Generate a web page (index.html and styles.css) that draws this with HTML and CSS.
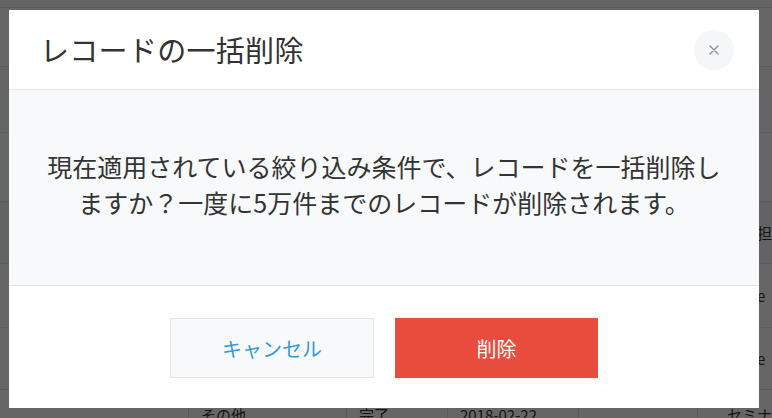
FILE: index.html
```html
<!DOCTYPE html>
<html lang="ja">
<head>
<meta charset="utf-8">
<title>レコードの一括削除</title>
<link rel="stylesheet" href="styles.css">
</head>
<body>
<div class="page">
  <div class="row row-a"></div>
  <div class="row row-b"></div>
  <div class="row row-c"></div>
  <div class="row row-d"></div>
  <div class="row row-e split"><span></span><span class="peek">担</span></div>
  <div class="row row-f split"><span></span><span class="peek">e</span></div>
  <div class="row row-g split"><span></span><span class="peek">e</span></div>
  <div class="row row-h cells">
    <span class="cell"></span>
    <span class="cell">その他</span>
    <span class="cell">完了</span>
    <span class="cell">2018-02-22</span>
    <span class="cell"></span>
    <span class="cell">セミナ</span>
  </div>
</div>

<div class="overlay">
  <div class="dialog" role="dialog">
    <div class="dlg-header">
      <h1 class="dlg-title">レコードの一括削除</h1>
      <button class="dlg-close" aria-label="閉じる">
        <svg width="10" height="10" viewBox="0 0 10 10"><path d="M1 1 L9 9 M9 1 L1 9" stroke="#8c8f91" stroke-width="1.4" stroke-linecap="round" fill="none"/></svg>
      </button>
    </div>
    <div class="dlg-body">
      <p class="dlg-text">現在適用されている絞り込み条件で、レコードを一括削除しますか？一度に5万件までのレコードが削除されます。</p>
    </div>
    <div class="dlg-footer">
      <button class="btn btn-cancel">キャンセル</button>
      <button class="btn btn-delete">削除</button>
    </div>
  </div>
</div>
</body>
</html>
```

FILE: styles.css
```css
* { box-sizing: border-box; }

html, body {
  margin: 0;
  padding: 0;
  width: 772px;
  height: 418px;
  overflow: hidden;
  font-family: "Noto Sans CJK JP", "Noto Sans", sans-serif;
  background: #ffffff;
}

/* background page (dimmed) */
.page {
  display: flex;
  flex-direction: column;
  width: 772px;
  height: 418px;
}
.row {
  flex: none;
  border-bottom: 1px solid #e6e6e6;
  background: #ffffff;
  color: #333333;
  font-size: 15px;
}
.row-a { height: 8px; background: #fafafa; }
.row-b { height: 59px; }
.row-c { height: 66px; background: #fbfbfb; }
.row-d { height: 69px; }
.row-e { height: 62px; background: #f7f7f7; }
.row-f { height: 64px; }
.row-g { height: 62px; }
.row-h { flex: 1; border-bottom: none; }

.split {
  display: grid;
  grid-template-columns: 757px 1fr;
  align-items: center;
}
.peek { white-space: nowrap; }

.cells {
  display: grid;
  grid-template-columns: 188px 158px 101px 131px 119px 75px;
}
.cell {
  border-left: 1px solid #e0e0e0;
  padding: 14px 0 0 12px;
  white-space: nowrap;
}
.cell:first-child { border-left: none; }
.cell:last-child { padding-left: 29px; }

/* overlay + dialog */
.overlay {
  position: fixed;
  inset: 0;
  background: rgba(0, 0, 0, 0.6);
  display: flex;
  align-items: flex-start;
  padding: 10px 0 0 9px;
}

.dialog {
  width: 750px;
  background: #ffffff;
  display: flex;
  flex-direction: column;
}

.dlg-header {
  height: 80px;
  border-bottom: 1px solid #e3e7e8;
  display: flex;
  align-items: center;
  justify-content: space-between;
  padding: 0 25px 1px 31px;
}
.dlg-title {
  margin: 0;
  font-size: 29px;
  font-weight: normal;
  color: #333333;
  letter-spacing: 0.3px;
}
.dlg-close {
  width: 40px;
  height: 40px;
  border: none;
  border-radius: 50%;
  background: #f5f6f7;
  padding: 0;
  display: flex;
  align-items: center;
  justify-content: center;
  margin-top: 1px;
}

.dlg-body {
  background: #f7f9fa;
  border-bottom: 1px solid #e3e7e8;
  padding: 58px 30px 65px;
}
.dlg-text {
  margin: 0;
  text-align: center;
  font-size: 25px;
  line-height: 36px;
  color: #333333;
}

.dlg-footer {
  display: flex;
  justify-content: center;
  gap: 21px;
  padding: 32px 0 30px;
}
.btn {
  height: 60px;
  font-family: "Noto Sans CJK JP", "Noto Sans", sans-serif;
  font-size: 20px;
  padding: 0;
}
.btn-cancel {
  width: 204px;
  background: #f7f9fa;
  border: 1px solid #e3e7e8;
  color: #3498db;
}
.btn-delete {
  width: 203px;
  background: #e74c3c;
  border: none;
  color: #ffffff;
}
```
